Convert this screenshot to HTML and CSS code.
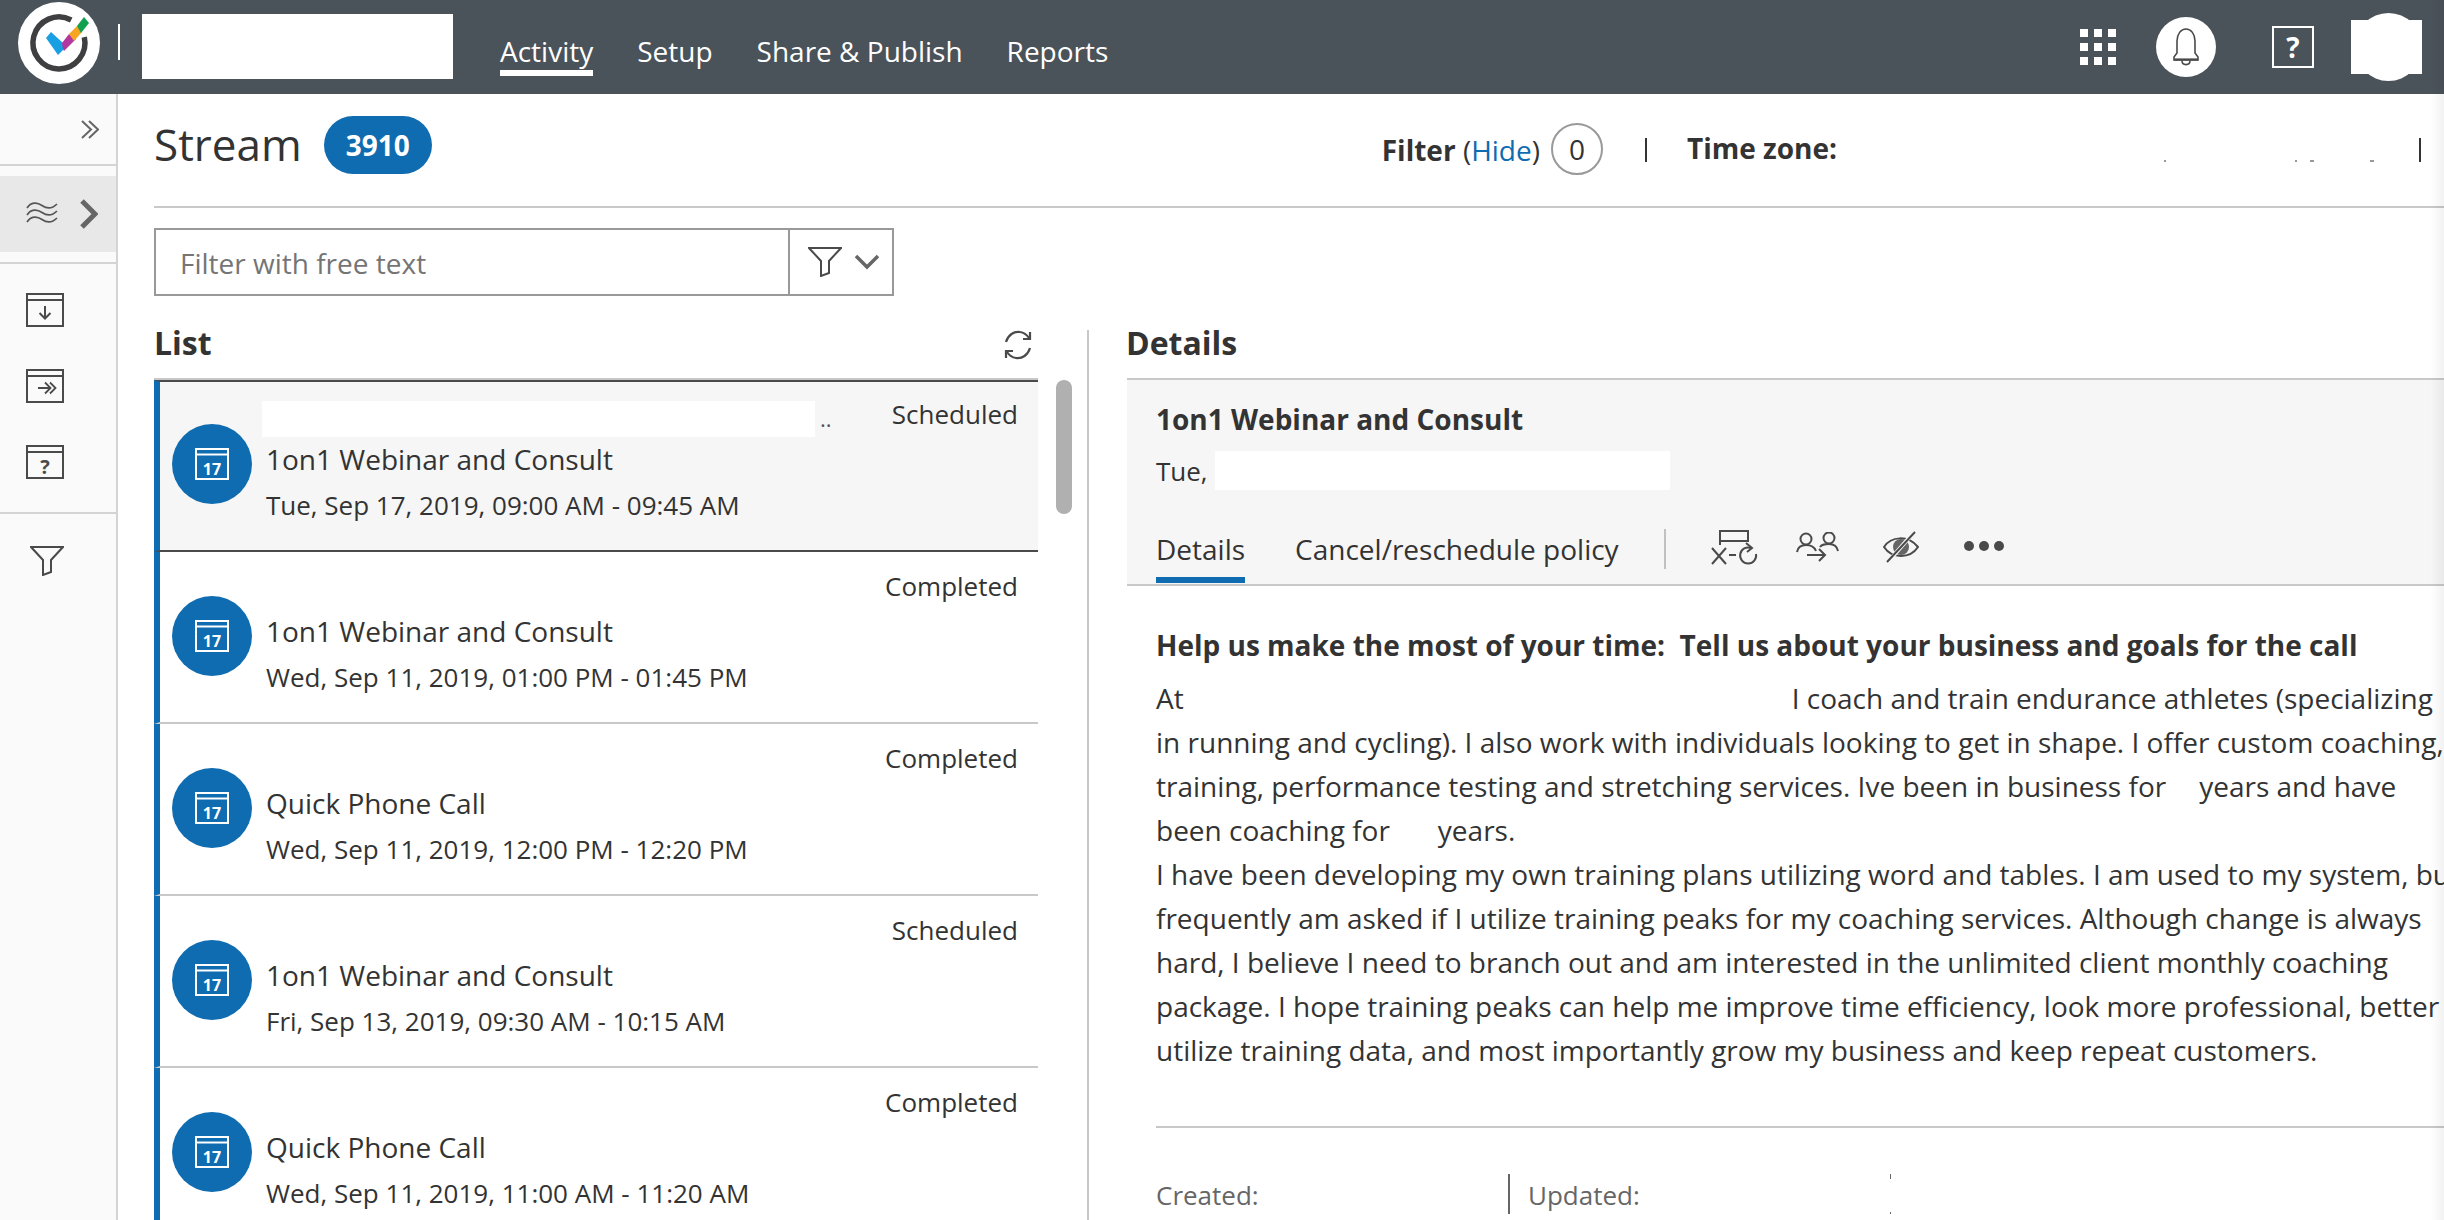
FILE: index.html
```html
<!DOCTYPE html>
<html lang="en">
<head>
<meta charset="utf-8">
<title>Stream</title>
<link rel="stylesheet" href="styles.css">
</head>
<body>
<header class="topbar">
  <svg class="logo" viewBox="0 0 82 82">
    <circle cx="41" cy="41" r="41" fill="#fff"/>
    <path d="M53.200 18A26 26 0 1 0 66.300 35.200" fill="none" stroke="#3f3f41" stroke-width="5.500"/>
    <path d="M28 36 33 30 45 41 46 47 40 53Z" fill="#19a0e3"/>
    <path d="M44 41 51 32 58 37 46 49 45 47Z" fill="#b2379f"/>
    <path d="M51 32 59 24 64 30 56 39Z" fill="#f5a623"/>
    <path d="M59 24 66 15 71 21 63 31Z" fill="#12a150"/>
  </svg>
  <span class="logo-sep"></span>
  <span class="org-mask"></span>
  <nav class="nav">
    <a class="nav-item nav-active">Activity</a>
    <a class="nav-item">Setup</a>
    <a class="nav-item">Share &amp; Publish</a>
    <a class="nav-item">Reports</a>
  </nav>
  <div class="top-right">
    <div class="apps"><i></i><i></i><i></i><i></i><i></i><i></i><i></i><i></i><i></i></div>
    <div class="bell">
      <svg class="bell-icon" viewBox="0 0 40 40" fill="none" stroke="#4a4a4a" stroke-width="1.600">
        <path d="M11 26V14C11 7 15 2 20 2S29 7 29 14V26L32 30V33H8V30Z"/>
        <path d="M8 32.500H32" stroke-width="2.200"/>
        <path d="M16 33.500C16 39 24 39 24 33.500"/>
      </svg>
    </div>
    <div class="help">?</div>
    <div class="avatar"></div>
  </div>
</header>
<div class="app">
  <aside class="side">
    <div class="side-toggle">
      <svg class="side-dbl" viewBox="0 0 18 19" fill="none" stroke="#666" stroke-width="2"><path d="M1 1 10 9.500 1 18M8 1 17 9.500 8 18"/></svg>
    </div>
    <div class="side-group">
      <div class="side-sel">
        <svg class="waves" viewBox="0 0 32 26" fill="none" stroke="#555" stroke-width="1.700"><path d="M1 7C5 1 11 1 16 4.500S26 8 31 3M1 14C5 8 11 8 16 11.500S26 15 31 10M1 21C5 15 11 15 16 18.500S26 22 31 17"/></svg>
        <svg class="chev" viewBox="0 0 18 30" fill="none" stroke="#666" stroke-width="5"><path d="M2 2 15 15 2 28"/></svg>
      </div>
    </div>
    <div class="side-icons">
      <svg class="win" viewBox="0 0 38 34" fill="none" stroke="#4a4a4a" stroke-width="2"><rect x="1" y="1" width="36" height="32"/><path d="M1 7H37M19 13V25M13.500 20 19 25.500 24.500 20"/></svg>
      <svg class="win" viewBox="0 0 38 34" fill="none" stroke="#4a4a4a" stroke-width="2"><rect x="1" y="1" width="36" height="32"/><path d="M1 7H37M12 19H24M19 13.500 24.500 19 19 24.500M24 13.500 29.500 19 24 24.500" stroke-width="1.800"/></svg>
      <svg class="win" viewBox="0 0 38 34" fill="none" stroke="#4a4a4a" stroke-width="2"><rect x="1" y="1" width="36" height="32"/><path d="M1 7H37"/><text x="19" y="29" text-anchor="middle" font-family="Open Sans" font-weight="700" font-size="20" fill="#4a4a4a" stroke="none">?</text></svg>
    </div>
    <div class="side-filter">
      <svg class="funnel" viewBox="0 0 34 30" fill="none" stroke="#4a4a4a" stroke-width="2"><path d="M1 1H33L21 14V26L13 29V14Z"/></svg>
    </div>
  </aside>
  <main class="content">
    <div class="page-head">
      <h1 class="page-title">Stream</h1>
      <span class="count">3910</span>
      <div class="head-right">
        <span class="filter-label"><b>Filter</b> (<a class="link">Hide</a>)</span>
        <span class="zero">0</span>
        <span class="bar"></span>
        <b class="tz">Time zone:</b>
        <span class="specks"><i></i><i></i><i></i><i></i></span>
        <span class="bar"></span>
      </div>
    </div>
    <div class="filterbox">
      <div class="filter-input">Filter with free text</div>
      <div class="filter-btn">
        <svg class="funnel-sm" viewBox="0 0 34 30" fill="none" stroke="#4a4a4a" stroke-width="2"><path d="M1 1H33L21 14V26L13 29V14Z"/></svg>
        <svg class="caret" viewBox="0 0 26 16" fill="none" stroke="#666" stroke-width="3.500"><path d="M2 2 13 13 24 2"/></svg>
      </div>
    </div>
    <div class="columns">
      <section class="list-col">
        <div class="list-wrap">
          <div class="col-head">
            <h2 class="col-title">List</h2>
            <svg class="refresh" viewBox="0 0 30 30" fill="none" stroke="#4a4a4a" stroke-width="2.200"><path d="M3 12C5 5 11 1 17 2 21 2.500 24 5 26 8"/><path d="M27 2V9H20"/><path d="M27 18C25 25 19 29 13 28 9 27.500 6 25 4 22"/><path d="M3 28V21H10"/></svg>
          </div>
          <div class="list">
            <article class="row row-sel">
              <span class="circle"><svg class="cal" viewBox="0 0 34 32"><rect x="1" y="1" width="32" height="30" fill="none" stroke="#fff" stroke-width="2"/><path d="M1 6.500H33" stroke="#fff" stroke-width="2"/><text x="17" y="26.500" text-anchor="middle" font-family="Open Sans" font-weight="700" font-size="16" fill="#fff">17</text></svg></span>
              <div class="row-body">
                <div class="row-top"><span class="row-mask"></span><span class="dots">..</span><span class="status">Scheduled</span></div>
                <div class="row-title">1on1 Webinar and Consult</div>
                <div class="row-date">Tue, Sep 17, 2019, 09:00 AM - 09:45 AM</div>
              </div>
            </article>
            <article class="row">
              <span class="circle"><svg class="cal" viewBox="0 0 34 32"><rect x="1" y="1" width="32" height="30" fill="none" stroke="#fff" stroke-width="2"/><path d="M1 6.500H33" stroke="#fff" stroke-width="2"/><text x="17" y="26.500" text-anchor="middle" font-family="Open Sans" font-weight="700" font-size="16" fill="#fff">17</text></svg></span>
              <div class="row-body">
                <div class="row-top"><span class="status">Completed</span></div>
                <div class="row-title">1on1 Webinar and Consult</div>
                <div class="row-date">Wed, Sep 11, 2019, 01:00 PM - 01:45 PM</div>
              </div>
            </article>
            <article class="row">
              <span class="circle"><svg class="cal" viewBox="0 0 34 32"><rect x="1" y="1" width="32" height="30" fill="none" stroke="#fff" stroke-width="2"/><path d="M1 6.500H33" stroke="#fff" stroke-width="2"/><text x="17" y="26.500" text-anchor="middle" font-family="Open Sans" font-weight="700" font-size="16" fill="#fff">17</text></svg></span>
              <div class="row-body">
                <div class="row-top"><span class="status">Completed</span></div>
                <div class="row-title">Quick Phone Call</div>
                <div class="row-date">Wed, Sep 11, 2019, 12:00 PM - 12:20 PM</div>
              </div>
            </article>
            <article class="row">
              <span class="circle"><svg class="cal" viewBox="0 0 34 32"><rect x="1" y="1" width="32" height="30" fill="none" stroke="#fff" stroke-width="2"/><path d="M1 6.500H33" stroke="#fff" stroke-width="2"/><text x="17" y="26.500" text-anchor="middle" font-family="Open Sans" font-weight="700" font-size="16" fill="#fff">17</text></svg></span>
              <div class="row-body">
                <div class="row-top"><span class="status">Scheduled</span></div>
                <div class="row-title">1on1 Webinar and Consult</div>
                <div class="row-date">Fri, Sep 13, 2019, 09:30 AM - 10:15 AM</div>
              </div>
            </article>
            <article class="row">
              <span class="circle"><svg class="cal" viewBox="0 0 34 32"><rect x="1" y="1" width="32" height="30" fill="none" stroke="#fff" stroke-width="2"/><path d="M1 6.500H33" stroke="#fff" stroke-width="2"/><text x="17" y="26.500" text-anchor="middle" font-family="Open Sans" font-weight="700" font-size="16" fill="#fff">17</text></svg></span>
              <div class="row-body">
                <div class="row-top"><span class="status">Completed</span></div>
                <div class="row-title">Quick Phone Call</div>
                <div class="row-date">Wed, Sep 11, 2019, 11:00 AM - 11:20 AM</div>
              </div>
            </article>
          </div>
        </div>
        <div class="scrollbar"></div>
      </section>
      <section class="detail-col">
        <h2 class="col-title detail-heading">Details</h2>
        <div class="detail-card">
          <div class="detail-name">1on1 Webinar and Consult</div>
          <div class="detail-when">Tue, <span class="when-mask"></span></div>
          <div class="tabs">
            <a class="tab tab-active">Details</a>
            <a class="tab">Cancel/reschedule policy</a>
            <span class="tab-sep"></span>
            <svg class="act act-1" viewBox="0 0 50 36" fill="none" stroke="#4a4a4a" stroke-width="2"><path d="M10 15V1H38V11H10"/><path d="M2 18 16 34M16 18 2 34"/><path d="M19 25H26"/><path d="M46 24A8 8 0 1 1 41 18"/><path d="M36 13 42 18 37 22"/></svg>
            <svg class="act act-2" viewBox="0 0 44 30" fill="none" stroke="#4a4a4a" stroke-width="2"><circle cx="10" cy="7" r="5.500"/><circle cx="33" cy="6" r="5.500"/><path d="M1 20C2 14 6 13 10 13S18 14 20 19"/><path d="M24 15C26 12 29 12 33 12S41 14 42 19"/><path d="M11 23H29M23 17 29 23 23 29"/></svg>
            <svg class="act act-3" viewBox="0 0 36 32" fill="none" stroke="#4a4a4a" stroke-width="2"><path d="M1 16C8 5 25 4 35 16 27 28 9 28 1 16Z"/><path d="M18 8A8 8 0 1 0 18 24 8 8 0 1 0 18 8Z" fill="#666" stroke="none"/><path d="M31 1 5 31" stroke="#f6f6f6" stroke-width="4"/><path d="M32 1 4 31"/></svg>
            <span class="more"><i></i><i></i><i></i></span>
          </div>
        </div>
        <div class="detail-body">
          <h3 class="body-head">Help us make the most of your time:&nbsp; Tell us about your business and goals for the call</h3>
          <p class="body-text">At<span class="gap gap-a"></span>I coach and train endurance athletes (specializing<br>in running and cycling). I also work with individuals looking to get in shape. I offer custom coaching,<br>training, performance testing and stretching services. Ive been in business for<span class="gap gap-b"></span>years and have<br>been coaching for<span class="gap gap-c"></span>years.<br>I have been developing my own training plans utilizing word and tables. I am used to my system, but<br>frequently am asked if I utilize training peaks for my coaching services. Although change is always<br>hard, I believe I need to branch out and am interested in the unlimited client monthly coaching<br>package. I hope training peaks can help me improve time efficiency, look more professional, better<br>utilize training data, and most importantly grow my business and keep repeat customers.</p>
          <div class="body-rule"></div>
          <div class="meta">
            <span class="meta-cell meta-created">Created:</span>
            <span class="meta-cell meta-updated">Updated:</span>
            <span class="meta-ticks"></span>
          </div>
        </div>
      </section>
    </div>
  </main>
</div>
</body>
</html>
```
FILE: styles.css
```css
* { box-sizing: border-box; }
html, body { margin: 0; height: 100%; }
body {
  width: 2444px;
  height: 1220px;
  overflow: hidden;
  display: flex;
  flex-direction: column;
  position: relative;
  background: #fff;
  color: #333;
  font-family: "Open Sans", "Liberation Sans", sans-serif;
  font-size: 26px;
}
body::after {
  content: "";
  position: absolute;
  top: 0; right: 0; bottom: 0;
  width: 14px;
  background: linear-gradient(to right, rgba(0,0,0,0), rgba(0,0,0,.05));
  pointer-events: none;
}
h1, h2, h3, p { margin: 0; }

/* top bar */
.topbar {
  flex: none;
  height: 94px;
  background: #4a525a;
  display: flex;
  align-items: center;
  padding-left: 18px;
  color: #fff;
}
.logo { width: 82px; height: 82px; flex: none; align-self: flex-start; margin-top: 2px; }
.logo-sep { width: 2px; height: 36px; background: #fff; margin-left: 18px; margin-top: -10px; }
.org-mask { width: 311px; height: 65px; background: #fff; margin-left: 22px; margin-top: -1px; }
.nav { display: flex; gap: 44px; margin-left: 47px; align-self: flex-start; margin-top: 33px; }
.nav-item { font-size: 28px; line-height: 37px; height: 43px; color: #fff; white-space: nowrap; }
.nav-active { border-bottom: 6px solid #fff; }
.top-right { margin-left: auto; display: flex; align-items: center; padding-right: 22px; }
.apps { display: grid; grid-template-columns: repeat(3, 8px); grid-auto-rows: 8px; gap: 6px; }
.apps i { background: #fff; }
.bell {
  width: 60px; height: 60px; border-radius: 50%; background: #fff;
  margin-left: 40px; display: flex; align-items: center; justify-content: center;
}
.bell-icon { width: 40px; height: 42px; }
.help {
  width: 42px; height: 42px; border: 2px solid #fff; margin-left: 56px;
  display: flex; align-items: center; justify-content: center;
  font-weight: 700; font-size: 28px; line-height: 1;
}
.avatar { width: 71px; height: 54px; background: #fff; margin-left: 37px; position: relative; }
.avatar::after {
  content: ""; position: absolute; left: 4px; top: -7px;
  width: 67px; height: 68px; border-radius: 50%; background: #fff;
}

/* app frame */
.app { flex: 1; display: flex; min-height: 0; }
.side { flex: none; width: 118px; background: #fafafa; border-right: 2px solid #d4d4d4; }
.side-toggle {
  height: 72px; border-bottom: 2px solid #d4d4d4;
  display: flex; justify-content: flex-end; padding: 26px 17px 0 0;
}
.side-dbl { width: 18px; height: 19px; }
.side-group { height: 98px; padding-top: 10px; border-bottom: 2px solid #d4d4d4; }
.side-sel {
  height: 76px; background: #e8e8e8;
  display: flex; align-items: center; padding-left: 26px; gap: 22px;
}
.waves { width: 32px; height: 26px; }
.chev { width: 18px; height: 30px; }
.side-icons {
  height: 250px; padding: 29px 0 0 26px; border-bottom: 2px solid #d4d4d4;
  display: flex; flex-direction: column; gap: 42px;
}
.win { width: 38px; height: 34px; display: block; flex: none; }
.side-filter { padding: 32px 0 0 30px; }
.funnel { width: 34px; height: 30px; display: block; }

/* content */
.content { flex: 1; min-width: 0; padding-left: 36px; display: flex; flex-direction: column; }
.page-head {
  flex: none; height: 114px; border-bottom: 2px solid #c8c8c8;
  display: flex; align-items: flex-start; padding: 20px 23px 0 0;
}
.page-title { font-size: 44px; font-weight: 400; line-height: 58px; margin-top: 1px; color: #333; }
.count {
  width: 108px; height: 58px; border-radius: 29px; background: #0f6cb0; color: #fff;
  margin-left: 22px; margin-top: 2px;
  display: flex; align-items: center; justify-content: center;
  font-size: 28px; font-weight: 700;
}
.head-right { margin-left: auto; margin-top: 9px; display: flex; align-items: flex-start; height: 52px; }
.filter-label { font-size: 28px; line-height: 36px; margin-top: 9px; white-space: nowrap; }
.filter-label b { font-weight: 700; }
.link { color: #0f6cb0; }
.zero {
  width: 52px; height: 52px; border: 2px solid #999; border-radius: 50%; margin-left: 11px;
  display: flex; align-items: center; justify-content: center; font-size: 28px;
}
.bar { width: 2px; height: 24px; background: #333; margin-top: 15px; flex: none; }
.zero + .bar { margin-left: 42px; }
.tz { font-size: 28px; line-height: 36px; margin-left: 40px; margin-top: 7px; font-weight: 700; white-space: nowrap; }
.specks { width: 580px; height: 39px; margin-left: 2px; display: flex; align-items: flex-end; }
.specks i { width: 2px; height: 2px; background: #999; }
.specks i:nth-child(1) { margin-left: 325px; }
.specks i:nth-child(2) { margin-left: 129px; }
.specks i:nth-child(3) { margin-left: 13px; width: 4px; }
.specks i:nth-child(4) { margin-left: 56px; width: 4px; }

.filterbox { flex: none; width: 740px; height: 68px; margin-top: 20px; display: flex; border: 2px solid #999; }
.filter-input { flex: 1; border-right: 2px solid #999; padding-left: 24px; line-height: 66px; color: #757575; font-size: 28px; }
.filter-btn { width: 102px; display: flex; align-items: center; padding-left: 18px; gap: 12px; }
.funnel-sm { width: 34px; height: 30px; flex: none; }
.caret { width: 26px; height: 16px; flex: none; }

.columns { flex: 1; min-height: 0; margin-top: 34px; display: flex; }
.list-col { flex: none; width: 935px; display: flex; gap: 18px; border-right: 2px solid #c8c8c8; padding-right: 17px; }
.list-wrap { flex: none; width: 884px; }
.col-head { height: 48px; display: flex; justify-content: space-between; align-items: flex-start; padding-right: 5px; }
.col-title { font-size: 32px; font-weight: 700; line-height: 44px; margin: -9px 0 13px; color: #333; }
.detail-heading { margin-left: -1px; }
.refresh { width: 30px; height: 30px; }
.list { border-top: 2px solid #c8c8c8; }
.row {
  height: 172px; display: flex; border-left: 6px solid #0f6cb0;
  border-bottom: 2px solid #c8c8c8; padding-left: 12px;
}
.row-sel { background: #f6f6f6; border-top: 2px solid #4a4a4a; border-bottom-color: #4a4a4a; }
.circle {
  flex: none; width: 80px; height: 80px; border-radius: 50%; background: #0f6cb0;
  margin-top: 44px; display: flex; align-items: center; justify-content: center;
}
.row-sel .circle { margin-top: 42px; }
.cal { width: 34px; height: 32px; }
.row-body { flex: 1; min-width: 0; padding: 21px 20px 0 14px; }
.row-sel .row-body { padding-top: 19px; }
.row-top { height: 35px; display: flex; align-items: flex-start; }
.row-mask { width: 553px; height: 36px; background: #fff; margin-left: -4px; flex: none; }
.dots { font-size: 22px; line-height: 34px; margin-left: 5px; color: #555; }
.status { margin-left: auto; line-height: 27px; font-size: 26px; }
.row-title { line-height: 46px; font-size: 28px; white-space: nowrap; }
.row-date { line-height: 47px; font-size: 26px; white-space: nowrap; }
.scrollbar { flex: none; width: 16px; height: 134px; margin-top: 50px; border-radius: 8px; background: #b0b0b0; }

.detail-col { flex: 1; min-width: 0; padding-left: 38px; }
.detail-card {
  height: 208px; background: #f6f6f6; border-top: 2px solid #c8c8c8; border-bottom: 2px solid #c8c8c8;
  padding: 20px 0 0 29px;
}
.detail-name { font-size: 28px; font-weight: 700; line-height: 38px; }
.detail-when { font-size: 26px; margin-top: 13px; display: flex; align-items: center; height: 39px; }
.when-mask { width: 455px; height: 39px; background: #fff; margin-left: 7px; }
.tabs { display: flex; align-items: flex-start; margin-top: 40px; }
.tab { font-size: 28px; line-height: 38px; height: 53px; white-space: nowrap; margin-right: 50px; }
.tab-active { border-bottom: 6px solid #0f6cb0; }
.tab-sep { width: 2px; height: 40px; background: #c0c0c0; margin-left: -5px; margin-top: -1px; }
.act { flex: none; margin-top: 0; }
.act-1 { width: 50px; height: 36px; margin-left: 44px; }
.act-2 { width: 44px; height: 30px; margin-left: 36px; margin-top: 2px; }
.act-3 { width: 36px; height: 32px; margin-left: 43px; margin-top: 1px; }
.more { display: flex; gap: 5px; margin-left: 45px; margin-top: 11px; }
.more i { width: 10px; height: 10px; border-radius: 50%; background: #4a4a4a; }

.detail-body { padding: 40px 0 0 29px; }
.body-head { font-size: 28px; font-weight: 700; line-height: 38px; white-space: nowrap; }
.body-text { font-size: 28px; line-height: 44px; margin-top: 12px; white-space: nowrap; }
.gap { display: inline-block; }
.gap-a { width: 608px; }
.gap-b { width: 33px; }
.gap-c { width: 48px; }
.body-rule { height: 2px; background: #c8c8c8; margin-top: 54px; }
.meta { display: flex; margin-top: 46px; height: 40px; font-size: 26px; color: #666; }
.meta-cell { line-height: 42px; }
.meta-created { width: 354px; border-right: 2px solid #666; }
.meta-updated { padding-left: 18px; width: 380px; }
.meta-ticks { width: 1px; height: 40px; background: linear-gradient(#666 5px, transparent 5px, transparent 38px, #666 38px); }
```
